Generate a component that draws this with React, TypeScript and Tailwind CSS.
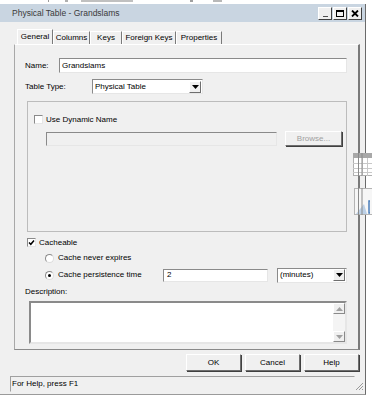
import React from "react";

const sunken =
  "border border-t-[#8a8a8a] border-l-[#8a8a8a] border-r-[#e6e6e6] border-b-[#e6e6e6]";
const raised =
  "border border-t-white border-l-white border-r-[#6e6e6e] border-b-[#6e6e6e] shadow-[1px_1px_0_#404040]";

function DownArrow({ color = "#000" }: { color?: string }) {
  return (
    <svg width="7" height="4" viewBox="0 0 7 4">
      <path d="M0 0 H7 L3.5 4 Z" fill={color} />
    </svg>
  );
}
function UpArrow({ color = "#000" }: { color?: string }) {
  return (
    <svg width="7" height="4" viewBox="0 0 7 4">
      <path d="M0 4 H7 L3.5 0 Z" fill={color} />
    </svg>
  );
}

function Checkbox({ checked }: { checked?: boolean }) {
  return (
    <div className={`w-[9px] h-[9px] bg-white ${sunken} flex items-center justify-center shrink-0`}>
      {checked && (
        <svg width="7" height="7" viewBox="0 0 7 7">
          <path d="M1 3.5 L2.8 5.3 L6 1.5" stroke="#000" strokeWidth="1.5" fill="none" />
        </svg>
      )}
    </div>
  );
}

function Radio({ checked }: { checked?: boolean }) {
  return (
    <div className="w-[9px] h-[9px] rounded-full bg-white border border-t-[#8a8a8a] border-l-[#8a8a8a] border-r-[#dcdcdc] border-b-[#dcdcdc] flex items-center justify-center shrink-0">
      {checked && <div className="w-[3px] h-[3px] rounded-full bg-black" />}
    </div>
  );
}

function Select({ w, label }: { w: string; label: string }) {
  return (
    <div className={`${w} h-[15px] bg-white ${sunken} flex items-center`}>
      <span className="pl-[2px] flex-1 leading-none">{label}</span>
      <div className="w-[12px] h-[12px] mr-[1px] bg-[#f0f0f0] border border-t-white border-l-white border-r-[#6e6e6e] border-b-[#6e6e6e] flex items-center justify-center">
        <DownArrow />
      </div>
    </div>
  );
}

function Tab({ w, label, active }: { w: string; label: string; active?: boolean }) {
  return (
    <div
      className={`${w} ${active ? "h-[15px] mt-0" : "h-[13px] mt-[2px]"} flex items-center justify-center border-l border-t border-l-white border-t-white border-r border-r-[#7a7a7a] leading-none`}
    >
      {label}
    </div>
  );
}

function WinBtn({ children }: { children: React.ReactNode }) {
  return (
    <div className="w-[14px] h-[13px] bg-[#f0f0f0] border border-t-white border-l-white border-r-[#404040] border-b-[#404040] flex items-center justify-center">
      {children}
    </div>
  );
}

export default function App() {
  return (
    <div className="relative w-[372px] h-[395px] bg-white overflow-hidden text-[8px] text-black font-['Liberation_Sans',Arial,sans-serif]">
      {/* background fragments above the window */}
      <div className="h-[4px] flex items-start">
        <div className="ml-[48px] w-[1px] h-[2px] bg-[#9a9a9a]" />
        <div className="ml-[16px] w-[3px] h-[2px] bg-[#b0b0b0]" />
        <div className="ml-[13px] w-[52px] h-[2px] bg-[#c0c0c0]" />
        <div className="ml-[57px] w-[3px] h-[2px] bg-[#a0a0a0]" />
        <div className="ml-[20px] w-[9px] h-[2px] bg-[#b8b8b8]" />
      </div>

      <div className="w-[366px] h-[391px] bg-[#f0f0f0] border-r border-r-[#6a6a6a] border-b border-b-[#9a9a9a] flex flex-col">
        {/* title bar */}
        <div className="h-[18px] bg-[#c9d5e1] flex items-center pl-[12px] pr-[3px]">
          <span className="flex-1 text-[8.5px] text-[#3a3a3a] leading-none">Physical Table - Grandslams</span>
          <div className="flex gap-[1px]">
            <WinBtn>
              <div className="w-[5px] h-[1px] bg-[#505050] mt-[6px]" />
            </WinBtn>
            <WinBtn>
              <div className="w-[8px] h-[7px] border border-black border-t-2" />
            </WinBtn>
            <WinBtn>
              <svg width="8" height="7" viewBox="0 0 8 7">
                <path d="M1 0.5 L7 6.5 M7 0.5 L1 6.5" stroke="#000" strokeWidth="1.8" />
              </svg>
            </WinBtn>
          </div>
        </div>

        {/* tabs */}
        <div className="mt-[7px] h-[15px] flex pl-[17px]">
          <Tab w="w-[36px]" label="General" active />
          <Tab w="w-[37px]" label="Columns" />
          <Tab w="w-[32px]" label="Keys" />
          <Tab w="w-[54px]" label="Foreign Keys" />
          <Tab w="w-[46px]" label="Properties" />
        </div>

        {/* panel */}
        <div className="ml-[14px] w-[346px] h-[306px] border-t border-t-white border-l border-l-[#a8a8a8] border-b border-b-[#8a8a8a] border-r-2 border-r-[#7a7a7a] flex flex-col">
          <div className="mt-[13px] h-[15px] flex items-center pl-[10px]">
            <span className="w-[34px] leading-none">Name:</span>
            <div className={`w-[288px] h-[15px] bg-white ${sunken} flex items-center pl-[2px] leading-none`}>
              Grandslams
            </div>
          </div>
          <div className="mt-[6px] h-[15px] flex items-center pl-[10px]">
            <span className="w-[67px] leading-none">Table Type:</span>
            <Select w="w-[111px]" label="Physical Table" />
          </div>

          {/* group box */}
          <div className="mt-[7px] ml-[12px] w-[320px] h-[131px] border border-[#bcbcbc] flex flex-col">
            <div className="mt-[13px] ml-[6px] flex items-center gap-[3px] h-[9px]">
              <Checkbox />
              <span className="leading-none">Use Dynamic Name</span>
            </div>
            <div className="mt-[7px] ml-[18px] flex items-center gap-[8px]">
              <div className={`w-[231px] h-[14px] bg-[#f0f0f0] ${sunken}`} />
              <div className={`w-[57px] h-[15px] bg-[#f0f0f0] ${raised} flex items-center justify-center text-[#a0a0a0] leading-none`}>
                Browse...
              </div>
            </div>
          </div>

          <div className="mt-[6px] ml-[12px] flex items-center gap-[3px] h-[9px]">
            <Checkbox checked />
            <span className="leading-none">Cacheable</span>
          </div>
          <div className="mt-[5px] ml-[30px] h-[12px] flex items-center gap-[4px]">
            <Radio />
            <span className="leading-none">Cache never expires</span>
          </div>
          <div className="mt-[4px] ml-[30px] h-[14px] flex items-center">
            <Radio checked />
            <span className="ml-[4px] w-[105px] leading-none">Cache persistence time</span>
            <div className={`w-[105px] h-[13px] bg-white ${sunken} flex items-center pl-[3px] leading-none`}>2</div>
            <div className="ml-[9px]">
              <Select w="w-[70px]" label="(minutes)" />
            </div>
          </div>
          <div className="mt-[4px] h-[12px] pl-[10px] flex items-center leading-none">Description:</div>
          <div className="mt-[3px] ml-[14px] w-[318px] h-[43px] bg-white border-2 border-t-[#8a8a8a] border-l-[#8a8a8a] border-r-[#e6e6e6] border-b-[#e6e6e6] flex justify-end">
            <div className="w-[12px] bg-[#f4f4f4] flex flex-col justify-between py-[0px] mr-[0px]">
              <div className="h-[11px] bg-[#f0f0f0] border border-t-white border-l-white border-r-[#8a8a8a] border-b-[#8a8a8a] flex items-center justify-center">
                <UpArrow color="#a0a0a0" />
              </div>
              <div className="h-[11px] bg-[#f0f0f0] border border-t-white border-l-white border-r-[#8a8a8a] border-b-[#8a8a8a] flex items-center justify-center">
                <DownArrow color="#a0a0a0" />
              </div>
            </div>
          </div>
        </div>

        {/* buttons */}
        <div className="mt-[4px] h-[17px] flex justify-end gap-[4px] pr-[6px]">
          {["OK", "Cancel", "Help"].map((b) => (
            <div key={b} className={`w-[55px] h-[17px] bg-[#f0f0f0] ${raised} flex items-center justify-center leading-none`}>
              {b}
            </div>
          ))}
        </div>

        {/* status bar */}
        <div className="mt-[5px] h-[16px] flex items-end pl-[10px]">
          <div className="w-[345px] h-[16px] border border-t-[#a0a0a0] border-l-[#a0a0a0] border-r-[#f0f0f0] border-b-[#f0f0f0] flex items-center pl-[1px] leading-none">
            For Help, press F1
          </div>
          <svg width="9" height="9" viewBox="0 0 9 9" className="mb-[1px]">
            <path d="M8 1 L1 8 M8 4 L4 8 M8 7 L7 8" stroke="#9a9a9a" strokeWidth="1" />
          </svg>
        </div>
      </div>

      {/* background items to the right of the dialog */}
      <svg className="absolute left-[353px] top-[153px]" width="19" height="23" viewBox="0 0 19 23">
        <rect x="0.5" y="0.5" width="19" height="22" fill="#ffffff" stroke="#b0b0b0" />
        <rect x="0" y="0" width="19" height="5" fill="#a8a8a8" />
        <path d="M0 10.5 H19 M0 15.5 H19 M0 19.5 H19 M9.5 5 V23 M14.5 5 V23" stroke="#c8c8c8" />
        <path d="M5.5 0 V23 M9 0 V23" stroke="#8a8a8a" />
      </svg>
      <svg className="absolute left-[354px] top-[188px]" width="18" height="27" viewBox="0 0 18 27">
        <rect x="0.5" y="0.5" width="18" height="26" fill="#f6f6f6" stroke="#b4b4b4" />
        <path d="M2 26 L10 16 L13 26 Z" fill="#bcd0e6" />
        <path d="M16 13 H15 V25 H16" stroke="#4a7ebb" strokeWidth="1.5" fill="none" />
        <path d="M4.5 0 V27 M8 0 V27" stroke="#8a8a8a" />
      </svg>
    </div>
  );
}
